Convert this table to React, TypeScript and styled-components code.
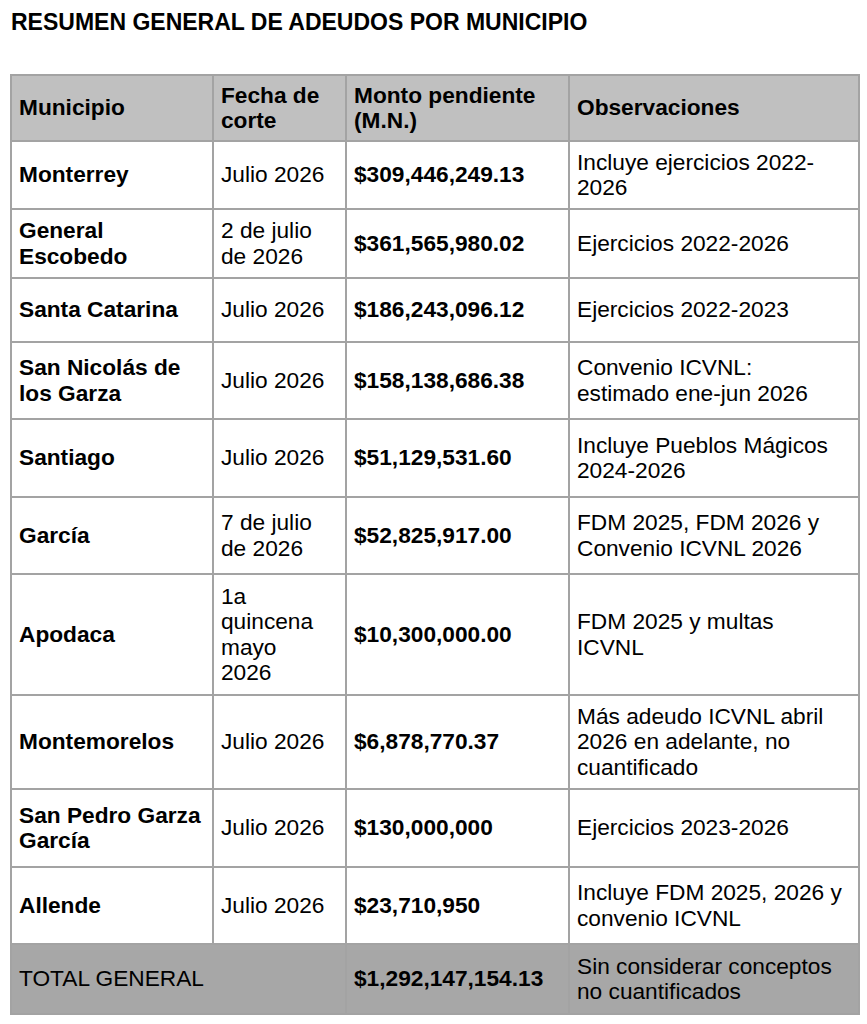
import { FC } from "react";
import styled, { createGlobalStyle } from "styled-components";

const GlobalStyle = createGlobalStyle`
  body {
    margin: 0;
    background: #fff;
    color: #000;
    font-family: "Liberation Sans", Arial, sans-serif;
  }
`;

const Page = styled.div`
  padding: 9px 10px 0 10px;
`;

const Title = styled.h1`
  margin: 0 0 39px 1px;
  font-size: 23px;
  line-height: 26px;
  font-weight: 700;
`;

const Table = styled.table`
  width: 848px;
  table-layout: fixed;
  border-collapse: collapse;
  font-size: 22.7px;
  line-height: 25.5px;
`;

const Row = styled.tr<{ $kind?: "head" | "total" }>`
  background: ${({ $kind }) => ($kind === "head" ? "#c0c0c0" : $kind === "total" ? "#a7a7a7" : "#fff")};
`;

const Cell = styled.td<{ $bold?: boolean; $h: number }>`
  height: ${({ $h }) => $h}px;
  padding: 0 6px 0 7px;
  border: 2px solid #a3a3a3;
  vertical-align: middle;
  white-space: nowrap;
  text-align: left;
  font-weight: ${({ $bold }) => ($bold ? 700 : 400)};
  box-sizing: border-box;
`;

type Item = {
  name: string[];
  date: string[];
  amount: string;
  note: string[];
  h: number;
};

const rows: Item[] = [
  { name: ["Monterrey"], date: ["Julio 2026"], amount: "$309,446,249.13", note: ["Incluye ejercicios 2022-", "2026"], h: 68 },
  { name: ["General", "Escobedo"], date: ["2 de julio", "de 2026"], amount: "$361,565,980.02", note: ["Ejercicios 2022-2026"], h: 69 },
  { name: ["Santa Catarina"], date: ["Julio 2026"], amount: "$186,243,096.12", note: ["Ejercicios 2022-2023"], h: 64 },
  { name: ["San Nicolás de", "los Garza"], date: ["Julio 2026"], amount: "$158,138,686.38", note: ["Convenio ICVNL:", "estimado ene-jun 2026"], h: 77 },
  { name: ["Santiago"], date: ["Julio 2026"], amount: "$51,129,531.60", note: ["Incluye Pueblos Mágicos", "2024-2026"], h: 78 },
  { name: ["García"], date: ["7 de julio", "de 2026"], amount: "$52,825,917.00", note: ["FDM 2025, FDM 2026 y", "Convenio ICVNL 2026"], h: 77 },
  { name: ["Apodaca"], date: ["1a", "quincena", "mayo", "2026"], amount: "$10,300,000.00", note: ["FDM 2025 y multas", "ICVNL"], h: 121 },
  { name: ["Montemorelos"], date: ["Julio 2026"], amount: "$6,878,770.37", note: ["Más adeudo ICVNL abril", "2026 en adelante, no", "cuantificado"], h: 94 },
  { name: ["San Pedro Garza", "García"], date: ["Julio 2026"], amount: "$130,000,000", note: ["Ejercicios 2023-2026"], h: 78 },
  { name: ["Allende"], date: ["Julio 2026"], amount: "$23,710,950", note: ["Incluye FDM 2025, 2026 y", "convenio ICVNL"], h: 77 },
];

const Lines: FC<{ lines: string[] }> = ({ lines }) => (
  <>
    {lines.map((l, i) => (
      <span key={i}>
        {i > 0 && <br />}
        {l}
      </span>
    ))}
  </>
);

const App: FC = () => (
  <Page>
    <GlobalStyle />
    <Title>RESUMEN GENERAL DE ADEUDOS POR MUNICIPIO</Title>
    <Table>
      <colgroup>
        <col style={{ width: 202 }} />
        <col style={{ width: 133 }} />
        <col style={{ width: 223 }} />
        <col style={{ width: 290 }} />
      </colgroup>
      <thead>
        <Row $kind="head">
          <Cell as="th" $bold $h={66}>Municipio</Cell>
          <Cell as="th" $bold $h={66}>
            <Lines lines={["Fecha de", "corte"]} />
          </Cell>
          <Cell as="th" $bold $h={66}>
            <Lines lines={["Monto pendiente", "(M.N.)"]} />
          </Cell>
          <Cell as="th" $bold $h={66}>Observaciones</Cell>
        </Row>
      </thead>
      <tbody>
        {rows.map((r) => (
          <Row key={r.name.join(" ")}>
            <Cell $bold $h={r.h}>
              <Lines lines={r.name} />
            </Cell>
            <Cell $h={r.h}>
              <Lines lines={r.date} />
            </Cell>
            <Cell $bold $h={r.h}>{r.amount}</Cell>
            <Cell $h={r.h}>
              <Lines lines={r.note} />
            </Cell>
          </Row>
        ))}
        <Row $kind="total">
          <Cell $h={70} colSpan={2}>TOTAL GENERAL</Cell>
          <Cell $bold $h={70}>$1,292,147,154.13</Cell>
          <Cell $h={70}>
            <Lines lines={["Sin considerar conceptos", "no cuantificados"]} />
          </Cell>
        </Row>
      </tbody>
    </Table>
  </Page>
);

export default App;
